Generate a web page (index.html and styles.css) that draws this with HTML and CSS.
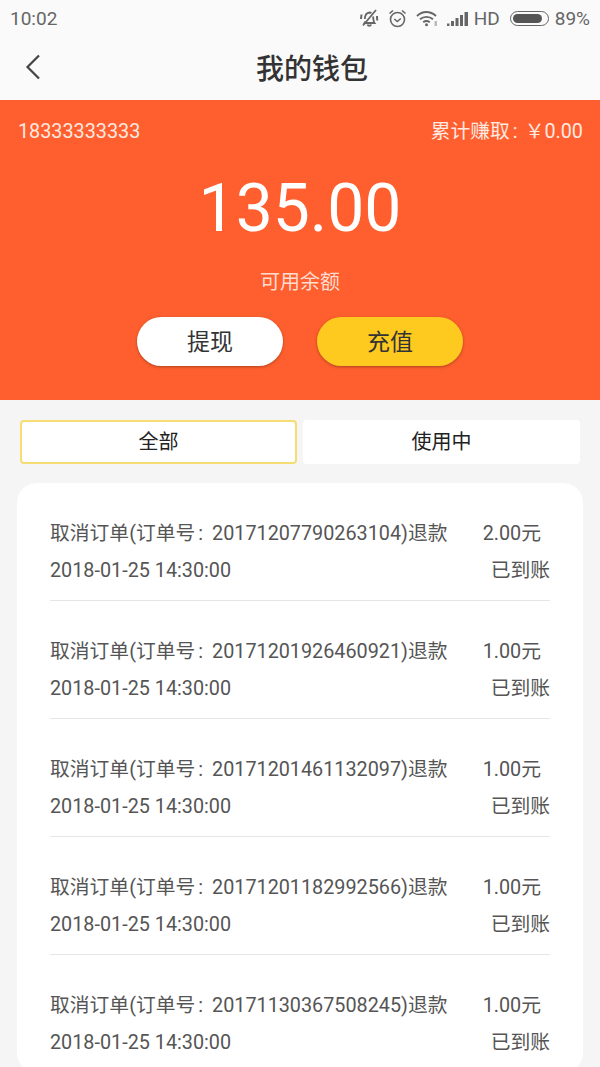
FILE: index.html
```html
<!DOCTYPE html>
<html lang="zh-CN">
<head>
  <meta charset="UTF-8">
  <meta name="viewport" content="width=device-width, initial-scale=1.0">
  <title>我的钱包</title>
  <link rel="stylesheet" href="styles.css">
</head>
<body>
  <div class="status-bar">
    <span class="status-time">10:02</span>
    <div class="status-icons">
      <svg class="icon-bell" width="20" height="20" viewBox="0 0 20 20" fill="none" stroke="#666" stroke-width="1.800">
        <path d="M6.500 13.500 5.500 15H15.500C14 13 14.500 10 14 8.500"/>
        <path d="M5.800 11C6 7.500 7.500 4.800 10.500 4.500c.8 0 1.500.2 2 .5"/>
        <path d="M8.500 16.500c.6 1.600 3 1.600 3.600 0" stroke-width="2"/>
        <path d="M17 2 4 17.500"/>
        <path d="M2.500 6.500 2 11M18 8l.2 4.500" stroke-width="2"/>
      </svg>
      <svg class="icon-alarm" width="19" height="20" viewBox="0 0 19 20" fill="none" stroke="#666" stroke-width="1.600">
        <circle cx="9.500" cy="11.500" r="7"/>
        <path d="M6.300 11l3 2.500 3.500-3"/>
        <path d="M1.500 5.500 5 2.500M17.500 5.500 14 2.500"/>
      </svg>
      <svg class="icon-wifi" width="22" height="18" viewBox="0 0 22 18" fill="none" stroke="#666" stroke-width="1.900">
        <path d="M1 7c5.500-5.300 13-5.300 19 0"/>
        <path d="M4 10.300c3.800-3.300 9.200-3.300 13 0"/>
        <path d="M7.200 13.300c2-1.500 4.600-1.500 6.600 0"/>
        <circle cx="10.500" cy="15.800" r="1.500" fill="#666" stroke="none"/>
        <rect x="18.500" y="12" width="2.500" height="5" fill="#bbb" stroke="none"/>
      </svg>
      <svg class="icon-signal" width="22" height="15" viewBox="0 0 22 15" fill="#666">
        <rect x="0" y="12.500" width="2.500" height="2.500"/>
        <rect x="4" y="10" width="3" height="5"/>
        <rect x="8.500" y="7" width="3" height="8"/>
        <rect x="13" y="4" width="3" height="11"/>
        <rect x="17.500" y="1" width="3.500" height="14"/>
      </svg>
      <span class="status-hd">HD</span>
      <div class="battery"><div class="battery-level"></div></div>
      <span class="status-pct">89%</span>
    </div>
  </div>

  <div class="nav-bar">
    <svg class="nav-back" width="18" height="28" viewBox="0 0 18 28" fill="none" stroke="#444" stroke-width="2.200">
      <path d="M15 2.500 3.500 14 15 25.500"/>
    </svg>
    <h1>我的钱包</h1>
  </div>

  <div class="wallet">
    <div class="wallet-top">
      <span>18333333333</span>
      <span>累计赚取<span class="colon">:</span>￥0.00</span>
    </div>
    <div class="wallet-amount">135.00</div>
    <div class="wallet-label">可用余额</div>
    <div class="wallet-btns">
      <div class="btn btn-white">提现</div>
      <div class="btn btn-yellow">充值</div>
    </div>
  </div>

  <div class="tabs">
    <div class="tab active">全部</div>
    <div class="tab">使用中</div>
  </div>

  <div class="records">
    <div class="record">
      <div class="record-line"><span>取消订单(订单号<span class="colon">:</span>20171207790263104)退款</span><span class="record-money">2.00元</span></div>
      <div class="record-line"><span>2018-01-25 14:30:00</span><span>已到账</span></div>
    </div>
    <div class="record">
      <div class="record-line"><span>取消订单(订单号<span class="colon">:</span>20171201926460921)退款</span><span class="record-money">1.00元</span></div>
      <div class="record-line"><span>2018-01-25 14:30:00</span><span>已到账</span></div>
    </div>
    <div class="record">
      <div class="record-line"><span>取消订单(订单号<span class="colon">:</span>20171201461132097)退款</span><span class="record-money">1.00元</span></div>
      <div class="record-line"><span>2018-01-25 14:30:00</span><span>已到账</span></div>
    </div>
    <div class="record">
      <div class="record-line"><span>取消订单(订单号<span class="colon">:</span>20171201182992566)退款</span><span class="record-money">1.00元</span></div>
      <div class="record-line"><span>2018-01-25 14:30:00</span><span>已到账</span></div>
    </div>
    <div class="record">
      <div class="record-line"><span>取消订单(订单号<span class="colon">:</span>20171130367508245)退款</span><span class="record-money">1.00元</span></div>
      <div class="record-line"><span>2018-01-25 14:30:00</span><span>已到账</span></div>
    </div>
  </div>
</body>
</html>
```

FILE: styles.css
```css
html, body {
  margin: 0;
  padding: 0;
}
body {
  width: 600px;
  height: 1067px;
  overflow: hidden;
  background: #f5f5f5;
  font-family: Roboto, "Noto Sans CJK SC", sans-serif;
  color: #444;
}
.status-bar {
  height: 36px;
  display: flex;
  justify-content: space-between;
  align-items: center;
  padding: 0 10px;
  background: #fafafa;
  color: #666;
  font-size: 19px;
}
.status-icons {
  display: flex;
  align-items: center;
  gap: 9px;
}
.status-hd {
  margin-left: -4px;
}
.battery {
  width: 39px;
  height: 15px;
  border: 1px solid #666;
  border-radius: 8px;
  padding: 2px;
  box-sizing: border-box;
  margin-left: 1px;
}
.battery-level {
  width: 89%;
  height: 100%;
  background: #555;
  border-radius: 5px;
}
.status-pct {
  margin-left: -3px;
}
.nav-bar {
  height: 64px;
  box-sizing: border-box;
  padding-bottom: 3px;
  position: relative;
  display: flex;
  justify-content: center;
  align-items: center;
  background: #fafafa;
}
.nav-bar h1 {
  margin: 0;
  padding-left: 24px;
  font-size: 28px;
  font-weight: 500;
  color: #333;
}
.nav-back {
  position: absolute;
  left: 24px;
  top: 17px;
}
.wallet {
  height: 300px;
  box-sizing: border-box;
  background: #ff5f2e;
  color: #fff;
  padding-top: 19px;
}
.wallet-top {
  display: flex;
  justify-content: space-between;
  padding: 0 17px 0 18px;
  font-size: 19.800px;
  line-height: 26px;
  color: #ffe9e0;
}
.colon {
  margin: 0 7px 0 3px;
}
.wallet-amount {
  text-align: center;
  font-size: 66px;
  line-height: 80px;
  margin-top: 24px;
}
.wallet-label {
  text-align: center;
  font-size: 20px;
  line-height: 26px;
  margin-top: 20px;
  color: #ffdccf;
}
.wallet-btns {
  display: flex;
  justify-content: center;
  gap: 34px;
  margin-top: 22px;
}
.btn {
  width: 146px;
  height: 49px;
  border-radius: 25px;
  text-align: center;
  font-size: 23px;
  line-height: 51px;
  color: #333;
  box-shadow: 0 1px 3px rgba(120, 50, 20, 0.6);
}
.btn-white {
  background: #fff;
}
.btn-yellow {
  background: #ffca20;
}
.tabs {
  display: grid;
  grid-template-columns: 1fr 1fr;
  gap: 6px;
  padding: 20px 20px 0;
}
.tab {
  height: 44px;
  box-sizing: border-box;
  background: #fff;
  border-radius: 4px;
  text-align: center;
  font-size: 20px;
  line-height: 45px;
  color: #222;
}
.tab.active {
  border: 2px solid #f7dc74;
  line-height: 41px;
}
.records {
  margin: 19px 17px 0;
  padding: 0 33px;
  background: #fff;
  border-radius: 20px;
}
.record {
  height: 118px;
  box-sizing: border-box;
  padding-top: 32px;
  border-bottom: 1px solid #e6e6e6;
}
.record:last-child {
  border-bottom: none;
}
.record-line {
  display: flex;
  justify-content: space-between;
  font-size: 19.800px;
  line-height: 37px;
  color: #555;
  white-space: nowrap;
}
.record-line .colon {
  margin-right: 9px;
}
.record-money {
  margin-right: 9px;
}
```
